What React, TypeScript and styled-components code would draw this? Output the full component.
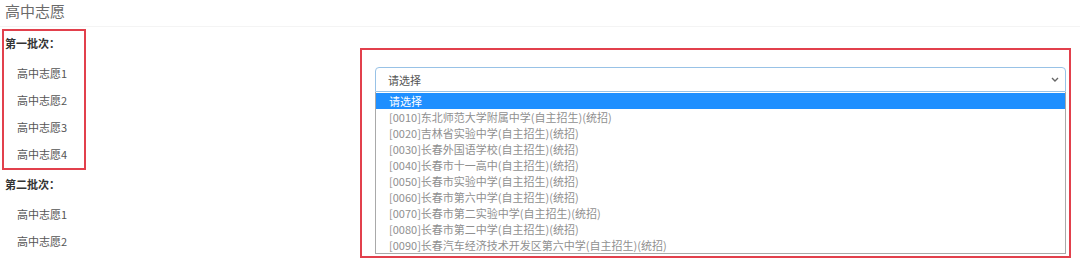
import React from "react";
import styled, { createGlobalStyle } from "styled-components";

const GlobalStyle = createGlobalStyle`
  body {
    margin: 0;
    background: #ffffff;
    font-family: "Noto Sans CJK SC", "Noto Sans", "Liberation Sans", sans-serif;
  }
`;

const Page = styled.div`
  width: 1080px;
  height: 259px;
  overflow: hidden;
`;

const Title = styled.h3`
  margin: 0;
  height: 26px;
  padding-left: 5px;
  font-size: 15px;
  font-weight: normal;
  line-height: 22px;
  color: #6a6a6a;
  border-bottom: 1px solid #f4f4f4;
`;

const Content = styled.div`
  display: flex;
  padding-top: 2px;
`;

const LeftColumn = styled.div`
  width: 358px;
  padding-left: 2px;
`;

const Group = styled.div<{ $marked?: boolean }>`
  width: 79px;
  padding: 2px 0 0 1px;
  border: 2px solid ${(p) => (p.$marked ? "#e2404c" : "transparent")};
`;

const BatchTitle = styled.div`
  font-size: 11px;
  font-weight: bold;
  line-height: 20px;
  color: #333333;
  margin-bottom: 7px;
`;

const Wish = styled.div`
  padding-left: 12px;
  font-size: 11px;
  line-height: 27px;
  color: #555555;
  white-space: nowrap;
`;

const SelectPanel = styled.div`
  flex: 1;
  margin: 19px 9px 0 0;
  padding: 17px 3px 2px 13px;
  border: 2px solid #e2404c;
`;

const SelectBox = styled.div`
  display: flex;
  align-items: center;
  justify-content: space-between;
  height: 23px;
  padding: 0 6px 0 12px;
  border: 1px solid #98c2e6;
  border-radius: 4px 4px 0 0;
  font-size: 11px;
  color: #555555;
`;

const OptionList = styled.div`
  border: 1px solid #a9a9a9;
  border-top: none;
  padding-top: 1px;
`;

const Option = styled.div<{ $active?: boolean }>`
  height: 16px;
  padding-left: 13px;
  font-size: 11px;
  line-height: 16px;
  white-space: nowrap;
  color: ${(p) => (p.$active ? "#ffffff" : "#909090")};
  background: ${(p) => (p.$active ? "#1e8fff" : "transparent")};
`;

const Chevron = () => (
  <svg width="8" height="5" viewBox="0 0 8 5">
    <path d="M1 1 L4 4 L7 1" fill="none" stroke="#666" strokeWidth="1.4" />
  </svg>
);

const schools = [
  "[0010]东北师范大学附属中学(自主招生)(统招)",
  "[0020]吉林省实验中学(自主招生)(统招)",
  "[0030]长春外国语学校(自主招生)(统招)",
  "[0040]长春市十一高中(自主招生)(统招)",
  "[0050]长春市实验中学(自主招生)(统招)",
  "[0060]长春市第六中学(自主招生)(统招)",
  "[0070]长春市第二实验中学(自主招生)(统招)",
  "[0080]长春市第二中学(自主招生)(统招)",
  "[0090]长春汽车经济技术开发区第六中学(自主招生)(统招)",
];

export default function App() {
  return (
    <Page>
      <GlobalStyle />
      <Title>高中志愿</Title>
      <Content>
        <LeftColumn>
          <Group $marked>
            <BatchTitle>第一批次：</BatchTitle>
            {[1, 2, 3, 4].map((n) => (
              <Wish key={n}>高中志愿{n}</Wish>
            ))}
          </Group>
          <Group>
            <BatchTitle>第二批次：</BatchTitle>
            {[1, 2].map((n) => (
              <Wish key={n}>高中志愿{n}</Wish>
            ))}
          </Group>
        </LeftColumn>
        <SelectPanel>
          <SelectBox>
            <span>请选择</span>
            <Chevron />
          </SelectBox>
          <OptionList>
            <Option $active>请选择</Option>
            {schools.map((s) => (
              <Option key={s}>{s}</Option>
            ))}
          </OptionList>
        </SelectPanel>
      </Content>
    </Page>
  );
}
